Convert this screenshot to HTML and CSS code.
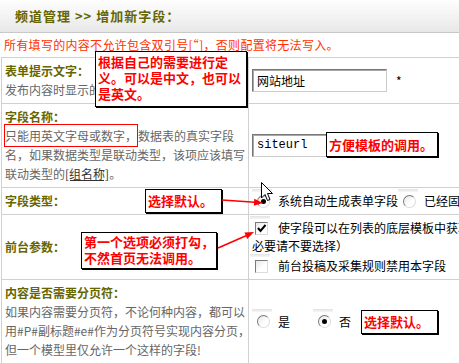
FILE: index.html
```html
<!DOCTYPE html>
<html lang="zh-CN">
<head>
    <meta charset="UTF-8">
    <title>增加新字段</title>
    <link rel="stylesheet" href="styles.css">
</head>
<body>
    <div class="page">
        <div class="title-bar">频道管理 &gt;&gt; 增加新字段：</div>
        <div class="notice">所有填写的内容不允许包含双引号[“]，否则配置将无法写入。</div>

        <div class="form-table">
            <div class="form-row">
                <div class="label-cell">
                    <div class="label-title">表单提示文字：</div>
                    <div class="label-desc">发布内容时显示的提示文字</div>
                </div>
                <div class="field-cell">
                    <span class="text-input wide">网站地址</span>
                    <span class="req">*</span>
                </div>
            </div>

            <div class="form-row">
                <div class="label-cell">
                    <div class="label-title">字段名称：</div>
                    <div class="label-desc"><span class="hl-box">只能用英文字母或数字，</span>数据表的真实字段<br>名，如果数据类型是联动类型，该项应该填写<br>联动类型的<span class="link">[组名称]</span>。</div>
                </div>
                <div class="field-cell">
                    <span class="text-input narrow mono">siteurl</span>
                </div>
            </div>

            <div class="form-row">
                <div class="label-cell">
                    <div class="label-title">字段类型：</div>
                </div>
                <div class="field-cell">
                    <span class="radio checked"></span><span class="opt">系统自动生成表单字段</span>
                    <span class="radio"></span><span class="opt">已经固化的表单字段</span>
                </div>
            </div>

            <div class="form-row">
                <div class="label-cell">
                    <div class="label-title">前台参数：</div>
                </div>
                <div class="field-cell stack">
                    <div class="option-line">
                        <span class="checkbox checked">
                            <svg width="11" height="11" viewBox="0 0 11 11"><path d="M2 5 L4.5 8 L9.5 2" fill="none" stroke="#000" stroke-width="2"/></svg>
                        </span>使字段可以在列表的底层模板中获取值（如果没有<br>必要请不要选择）
                    </div>
                    <div class="option-line second">
                        <span class="checkbox"></span>前台投稿及采集规则禁用本字段
                    </div>
                </div>
            </div>

            <div class="form-row">
                <div class="label-cell">
                    <div class="label-title">内容是否需要分页符：</div>
                    <div class="label-desc">如果内容需要分页符，不论何种内容，都可以<br>用#P#副标题#e#作为分页符号实现内容分页，<br>但一个模型里仅允许一个这样的字段!</div>
                </div>
                <div class="field-cell">
                    <span class="radio"></span><span class="opt yes">是</span>
                    <span class="radio checked"></span><span class="opt">否</span>
                </div>
            </div>
        </div>

        <!-- annotations drawn over the form -->
        <div class="callout c1">根据自己的需要进行定<br>义。可以是中文，也可以<br>是英文。</div>
        <div class="callout c2 single">方便模板的调用。</div>
        <div class="callout c3 single">选择默认。</div>
        <div class="callout c4">第一个选项必须打勾，<br>不然首页无法调用。</div>
        <div class="callout c5 single">选择默认。</div>

        <svg class="arrows" width="459" height="363" viewBox="0 0 459 363">
            <line x1="222" y1="200" x2="255" y2="202.3" stroke="#f00" stroke-width="1.5"/>
            <polygon points="263,203 253.8,205.8 254.3,198.8" fill="#f00"/>
            <line x1="218" y1="248" x2="246" y2="235.7" stroke="#f00" stroke-width="1.5"/>
            <polygon points="254,232 247.2,238.9 244.4,232.5" fill="#f00"/>
        </svg>

        <svg class="cursor" width="13" height="20" viewBox="0 0 13 20">
            <path d="M0.5 0.5 L0.5 16 L4 12.5 L6.5 18.5 L9 17.5 L6.5 11.5 L11.5 11.5 Z" fill="#fff" stroke="#000"/>
        </svg>
    </div>
</body>
</html>
```

FILE: styles.css
```css
/* DedeCMS style admin form */
body {
    margin: 0;
    font-family: "Noto Sans CJK SC", "Liberation Sans", sans-serif;
    font-size: 12px;
    background: #fff;
    overflow: hidden;
}

.page {
    position: relative;
    width: 620px;
}

.title-bar {
    height: 32px;
    line-height: 32px;
    padding-left: 15px;
    border-bottom: 1px solid #c8c8c8;
    background: linear-gradient(#fefefe, #e8e8e8);
    color: #666600;
    font-weight: bold;
    font-size: 13px;
    letter-spacing: 1px;
}

.notice {
    line-height: 24px;
    padding-left: 4px;
    color: #ff3300;
    letter-spacing: 0.3px;
}

.form-table {
    margin-left: 1px;
    border-left: 1px solid #d0d0d0;
    border-top: 1px solid #d0d0d0;
}

.form-row {
    display: grid;
    grid-template-columns: 247px 1fr;
    border-bottom: 1px solid #d0d0d0;
}

.label-cell {
    padding: 4px 3px;
    border-right: 1px solid #d0d0d0;
    display: flex;
    flex-direction: column;
    justify-content: center;
}

.label-title {
    color: #666600;
    font-weight: bold;
    line-height: 18px;
}

.label-desc {
    color: #666;
    line-height: 19px;
    white-space: nowrap;
}

.hl-box {
    border: 1px solid #f00;
    padding: 2px 0;
    margin-left: -1px;
}

.link {
    color: #333;
    text-decoration: underline;
}

.field-cell {
    padding: 4px 3px;
    display: flex;
    align-items: center;
    white-space: nowrap;
    color: #000;
}

.field-cell.stack {
    flex-direction: column;
    align-items: flex-start;
    justify-content: center;
}

.text-input {
    display: block;
    box-sizing: border-box;
    height: 23px;
    line-height: 21px;
    padding-left: 4px;
    border: 1px solid;
    border-color: #777 #ccc #ccc #777;
    box-shadow: inset 1px 1px 0 #a8a8a8;
    background: #fff;
}

.text-input.wide {
    width: 135px;
}

.text-input.narrow {
    width: 100px;
}

.mono {
    font-family: "Liberation Mono", monospace;
    font-size: 12px;
}

.req {
    margin-left: 9px;
}

.radio,
.checkbox {
    position: relative;
    display: inline-block;
    box-sizing: border-box;
    width: 13px;
    height: 13px;
    flex-shrink: 0;
    border: 1px solid;
    border-color: #7a7a7a #dcdcdc #dcdcdc #7a7a7a;
    background: linear-gradient(135deg, #e6e6e6, #fff 60%);
}

.radio {
    border-radius: 50%;
    margin: 0 8px 0 5px;
}

.radio.checked::after {
    content: "";
    position: absolute;
    left: 3px;
    top: 3px;
    width: 5px;
    height: 5px;
    border-radius: 50%;
    background: #000;
}

.radio::before,
.checkbox::before {
    content: "";
    position: absolute;
    left: -6px;
    top: -7px;
    width: 20px;
    height: 3px;
    background: linear-gradient(#e2e2e2, #f6f6f6);
}

.checkbox {
    margin: 0 10px 0 3px;
    vertical-align: -2px;
}

.checkbox svg {
    position: absolute;
    left: 0;
    top: 0;
}

.opt {
    line-height: 18px;
}

.opt.yes {
    margin-right: 23px;
}

.option-line {
    line-height: 18px;
}

.option-line.second {
    margin-top: 2px;
}

.callout {
    position: absolute;
    box-sizing: border-box;
    background: #fff;
    border: 1px solid #000;
    box-shadow: 1px 1px 0 #000;
    color: #f00;
    font-weight: bold;
    font-size: 13px;
    line-height: 16px;
    padding: 2px 2px;
    white-space: nowrap;
}

.callout.single {
    padding: 0 2px;
}

.c1 {
    left: 95px;
    top: 51px;
    width: 152px;
    height: 56px;
}

.c2 {
    left: 326px;
    top: 132px;
    width: 112px;
    height: 25px;
    line-height: 23px;
}

.c3 {
    left: 145px;
    top: 189px;
    width: 77px;
    height: 24px;
    line-height: 22px;
}

.c4 {
    left: 81px;
    top: 232px;
    width: 136px;
    height: 37px;
    padding-top: 1px;
}

.c5 {
    left: 361px;
    top: 310px;
    width: 77px;
    height: 24px;
    line-height: 22px;
}

.arrows {
    position: absolute;
    left: 0;
    top: 0;
    pointer-events: none;
}

.cursor {
    position: absolute;
    left: 261px;
    top: 182px;
}
```
